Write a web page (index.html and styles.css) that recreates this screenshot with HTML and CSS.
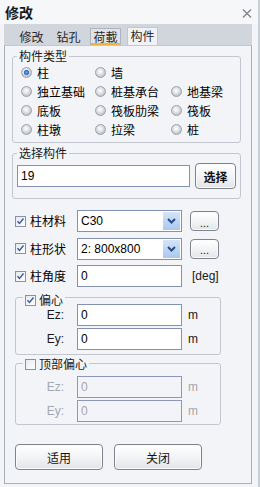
FILE: index.html
```html
<!DOCTYPE html>
<html>
<head>
<meta charset="utf-8">
<link rel="stylesheet" href="styles.css">
</head>
<body>
<div class="window">
  <div class="titlebar">
    <span class="title">修改</span>
    <svg class="close" width="10" height="9" viewBox="0 0 10 9"><path d="M1 0.5l8 8M9 0.5l-8 8" stroke="#7c8088" stroke-width="1.2" fill="none"/></svg>
  </div>
  <div class="tabstrip">
    <span class="tab">修改</span>
    <span class="tab">钻孔</span>
    <span class="tab hot">荷載</span>
    <span class="tab active">构件</span>
  </div>
  <div class="page">
    <div class="group g-type">
      <div class="ghead"><span class="gtitle">构件类型</span></div>
      <div class="radios">
        <label class="radio"><span class="rb on"></span>柱</label>
        <label class="radio"><span class="rb"></span>墙</label>
        <span></span>
        <label class="radio"><span class="rb"></span>独立基础</label>
        <label class="radio"><span class="rb"></span>桩基承台</label>
        <label class="radio"><span class="rb"></span>地基梁</label>
        <label class="radio"><span class="rb"></span>底板</label>
        <label class="radio"><span class="rb"></span>筏板肋梁</label>
        <label class="radio"><span class="rb"></span>筏板</label>
        <label class="radio"><span class="rb"></span>柱墩</label>
        <label class="radio"><span class="rb"></span>拉梁</label>
        <label class="radio"><span class="rb"></span>桩</label>
      </div>
    </div>

    <div class="group g-sel">
      <div class="ghead"><span class="gtitle">选择构件</span></div>
      <div class="selrow">
        <span class="input wide">19</span>
        <span class="btn bold">选择</span>
      </div>
    </div>

    <div class="props">
      <div class="prow">
        <label class="plabel"><span class="cb"><svg width="9" height="9" viewBox="0 0 9 9"><path d="M1.5 4.2l2 2.2 4-4.8" stroke="#3f5f9c" stroke-width="1.5" fill="none"/></svg></span>柱材料</label>
        <span class="combo"><span class="ctext">C30</span><span class="cbtn"><svg width="9" height="6" viewBox="0 0 9 6"><path d="M1 1l3.5 3.5L8 1" stroke="#2c4a86" stroke-width="2" fill="none"/></svg></span></span>
        <span class="btn dots">...</span>
      </div>
      <div class="prow">
        <label class="plabel"><span class="cb"><svg width="9" height="9" viewBox="0 0 9 9"><path d="M1.5 4.2l2 2.2 4-4.8" stroke="#3f5f9c" stroke-width="1.5" fill="none"/></svg></span>柱形状</label>
        <span class="combo"><span class="ctext">2: 800x800</span><span class="cbtn"><svg width="9" height="6" viewBox="0 0 9 6"><path d="M1 1l3.5 3.5L8 1" stroke="#2c4a86" stroke-width="2" fill="none"/></svg></span></span>
        <span class="btn dots">...</span>
      </div>
      <div class="prow">
        <label class="plabel"><span class="cb"><svg width="9" height="9" viewBox="0 0 9 9"><path d="M1.5 4.2l2 2.2 4-4.8" stroke="#3f5f9c" stroke-width="1.5" fill="none"/></svg></span>柱角度</label>
        <span class="input field">0</span>
        <span class="unit deg">[deg]</span>
      </div>
    </div>

    <div class="group g-ecc">
      <div class="ghead chk"><span class="gtitle"><span class="cb"><svg width="9" height="9" viewBox="0 0 9 9"><path d="M1.5 4.2l2 2.2 4-4.8" stroke="#3f5f9c" stroke-width="1.5" fill="none"/></svg></span>偏心</span></div>
      <div class="erows">
        <div class="erow"><span class="elabel">Ez:</span><span class="input field">0</span><span class="unit">m</span></div>
        <div class="erow"><span class="elabel">Ey:</span><span class="input field">0</span><span class="unit">m</span></div>
      </div>
    </div>

    <div class="group g-top">
      <div class="ghead chk"><span class="gtitle"><span class="cb"></span>顶部偏心</span></div>
      <div class="erows dis">
        <div class="erow"><span class="elabel">Ez:</span><span class="input field">0</span><span class="unit">m</span></div>
        <div class="erow"><span class="elabel">Ey:</span><span class="input field">0</span><span class="unit">m</span></div>
      </div>
    </div>

    <div class="buttons">
      <span class="btn big">适用</span>
      <span class="btn big">关闭</span>
    </div>
  </div>
</div>
</body>
</html>
```

FILE: styles.css
```css
* { box-sizing: border-box; }
html, body { margin: 0; padding: 0; }
body {
  width: 260px;
  height: 487px;
  overflow: hidden;
  font-family: "Noto Sans CJK SC", "Liberation Sans", sans-serif;
  font-size: 12px;
  color: #000;
  background: #f3f4f7;
}
.window {
  width: 260px;
  height: 487px;
  display: flex;
  flex-direction: column;
  background: #f3f4f7;
  border-right: 2px solid #c9cdd4;
}
.titlebar {
  height: 24px;
  flex: none;
  display: flex;
  align-items: center;
  justify-content: space-between;
  padding: 0 6px 0 5px;
  background: #f6f7f9;
}
.title {
  font-weight: bold;
  font-size: 14px;
  line-height: 16px;
  color: #1b1b1b;
}
.close { margin-top: 2px; }
.tabstrip {
  height: 21px;
  flex: none;
  display: flex;
  align-items: flex-end;
  gap: 6px;
  padding-left: 12px;
  margin: 0 6px 0 4px;
  background: #d1d5dc;
}
.tab {
  width: 31px;
  height: 17px;
  line-height: 15px;
  text-align: center;
  color: #2a2a2a;
  border: 1px solid transparent;
  border-bottom: none;
}
.tab.hot {
  border-color: #aeb3bd;
  background: #dfe2e8;
  box-shadow: inset 0 -2px 0 #f2b33d;
}
.tab.active {
  background: #f1f2f5;
  border-color: #c3c7cf;
  height: 18px;
}
.page {
  flex: 1;
  margin: 0 6px 3px 4px;
  border: 1px solid #a9afb9;
  border-top-color: #c3c7cf;
  background: #f3f4f7;
  display: flex;
  flex-direction: column;
  align-items: flex-start;
}
.group {
  border: 1px solid #c2c6ce;
  border-radius: 3px;
}
.ghead {
  display: flex;
  height: 14px;
  line-height: 14px;
  margin-top: -8px;
}
.gtitle {
  background: #f3f4f7;
  padding: 0 2px;
  margin-left: 4px;
  color: #1a1a1a;
}
.g-type {
  margin: 10px 0 0 7px;
  width: 229px;
  padding-bottom: 3px;
}
.radios {
  display: grid;
  grid-template-columns: 74px 76px 1fr;
  grid-auto-rows: 19px;
  padding-left: 8px;
}
.radio {
  display: flex;
  align-items: center;
  gap: 5px;
  line-height: 14px;
}
.rb {
  width: 11px;
  height: 11px;
  border-radius: 50%;
  border: 1px solid #9da2ab;
  background: radial-gradient(circle at 45% 40%, #ffffff 0, #e4e6ea 35%, #b9bcc3 80%, #a3a7ae 100%);
  flex: none;
}
.rb.on {
  background:
    radial-gradient(circle at 50% 50%, #6fa6ec 0, #2f6fca 2.2px, rgba(47,111,202,0) 3px),
    radial-gradient(circle at 45% 40%, #ffffff 0, #e4e6ea 35%, #b9bcc3 80%, #a3a7ae 100%);
}
.g-sel {
  margin: 10px 0 0 7px;
  width: 229px;
  padding: 0 0 9px 4px;
}
.g-sel .ghead { margin-left: -4px; }
.selrow {
  display: flex;
  align-items: center;
  gap: 5px;
  margin-top: 3px;
  height: 26px;
}
.input {
  height: 22px;
  border: 1px solid #8391b3;
  background: #fff;
  font-family: "Liberation Sans", "Noto Sans CJK SC", sans-serif;
  font-size: 12px;
  line-height: 20px;
  padding-left: 3px;
}
.input.wide { width: 173px; }
.input.field { width: 105px; }
.btn {
  display: flex;
  align-items: center;
  justify-content: center;
  border: 1px solid #7f848c;
  border-radius: 4px;
  background: linear-gradient(#ffffff 0%, #f3f4f6 50%, #e2e4e8 100%);
  box-shadow: inset 0 0 0 1px #fbfbfc;
  color: #111;
}
.btn.bold {
  width: 41px;
  height: 26px;
  font-weight: bold;
  font-size: 12px;
}
.props {
  margin: 11px 0 0 10px;
  display: flex;
  flex-direction: column;
  gap: 5.5px;
}
.prow {
  display: flex;
  align-items: center;
  height: 22px;
}
.plabel {
  width: 62px;
  display: flex;
  align-items: center;
  gap: 4px;
  line-height: 14px;
  flex: none;
}
.cb {
  width: 11px;
  height: 11px;
  border: 1px solid #8792a8;
  background: linear-gradient(135deg, #e6e9ee, #ffffff);
  display: flex;
  align-items: center;
  justify-content: center;
  flex: none;
}
.cb svg { display: block; }
.combo {
  width: 105px;
  height: 22px;
  border: 1px solid #8391b3;
  background: #fff;
  display: flex;
  align-items: stretch;
}
.ctext {
  flex: 1;
  font-family: "Liberation Sans", sans-serif;
  font-size: 12px;
  line-height: 20px;
  padding-left: 3px;
}
.cbtn {
  width: 17px;
  margin: 1px;
  background: linear-gradient(#d3e4f8, #aac8ee);
  display: flex;
  align-items: center;
  justify-content: center;
}
.btn.dots {
  width: 29px;
  height: 20px;
  margin-left: 8px;
  font-family: "Liberation Sans", sans-serif;
  font-size: 11px;
  line-height: 12px;
  padding-top: 3px;
}
.unit {
  font-family: "Liberation Sans", sans-serif;
  font-size: 12px;
  margin-left: 6px;
  color: #1a1a1a;
}
.unit.deg { margin-left: 10px; }
.g-ecc {
  margin: 10px 0 0 10px;
  width: 206px;
  padding-bottom: 4px;
}
.ghead.chk {
  height: 12px;
  line-height: 12px;
  margin-top: -4px;
}
.ghead.chk .gtitle {
  display: flex;
  align-items: center;
  gap: 3px;
  margin-left: 7px;
}
.erows {
  display: flex;
  flex-direction: column;
  gap: 2px;
  margin-top: -2px;
}
.erow {
  display: flex;
  align-items: center;
  height: 22px;
}
.elabel {
  width: 48px;
  text-align: right;
  margin-right: 13px;
  font-family: "Liberation Sans", sans-serif;
  font-size: 12px;
  color: #1a1a1a;
}
.g-top {
  margin: 8px 0 0 10px;
  width: 206px;
  padding-bottom: 2px;
}
.g-top .ghead.chk { margin-top: -6px; }
.g-top .erows { margin-top: 6px; }
.dis .elabel, .dis .unit, .dis .input { color: #a4a7ad; }
.dis .input { background: #f3f4f7; border-color: #8e97b9; }
.buttons {
  display: flex;
  gap: 11px;
  margin: 19px 0 0 10px;
}
.btn.big {
  width: 88px;
  height: 26px;
}
```
